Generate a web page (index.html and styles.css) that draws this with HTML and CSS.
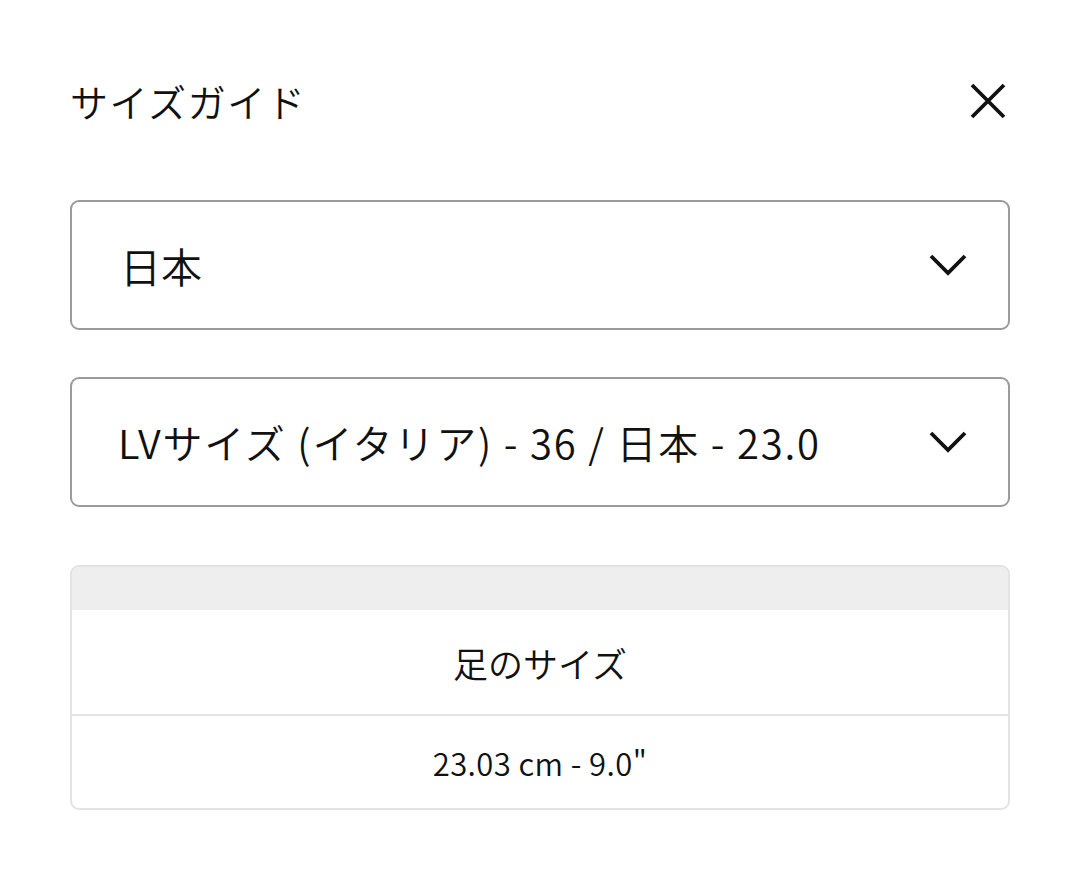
FILE: index.html
```html
<!DOCTYPE html>
<html lang="ja">
<head>
<meta charset="utf-8">
<title>サイズガイド</title>
<link rel="stylesheet" href="styles.css">
</head>
<body>
<main class="page">
  <header class="head">
    <h1 class="title">サイズガイド</h1>
    <button class="close" aria-label="閉じる">
      <svg width="38" height="38" viewBox="0 0 38 38"><path d="M3 3 L35 35 M35 3 L3 35" stroke="#111" stroke-width="3.8" fill="none"/></svg>
    </button>
  </header>

  <div class="select select-first">
    <span class="select-text">日本</span>
    <svg class="chev" width="38" height="24" viewBox="0 0 38 24"><path d="M2 3 L19 20 L36 3" stroke="#111" stroke-width="3.8" fill="none"/></svg>
  </div>

  <div class="select select-second">
    <span class="select-text select-text-long">LVサイズ (イタリア) - 36 / 日本 - 23.0</span>
    <svg class="chev" width="38" height="24" viewBox="0 0 38 24"><path d="M2 3 L19 20 L36 3" stroke="#111" stroke-width="3.8" fill="none"/></svg>
  </div>

  <div class="table">
    <div class="thead"></div>
    <div class="row row-label">足のサイズ</div>
    <div class="row row-value">23.03 cm - 9.0"</div>
  </div>
</main>
</body>
</html>
```

FILE: styles.css
```css
* { box-sizing: border-box; }
html, body { margin: 0; padding: 0; background: #fff; }
body {
  font-family: "Noto Sans CJK JP", "Noto Sans", sans-serif;
  font-weight: 350;
  color: #111;
}
.page {
  padding: 71px 70px 0 70px;
}
.head {
  height: 60px;
  display: flex;
  align-items: center;
  justify-content: space-between;
}
.title {
  margin: 0;
  font-size: 38px;
  font-weight: 350;
  line-height: 1;
  letter-spacing: 1.6px;
}
.close {
  border: 0;
  background: none;
  padding: 0;
  margin-right: 3px;
  width: 38px;
  height: 38px;
  display: flex;
  align-items: center;
  justify-content: center;
}
.select {
  height: 130px;
  border: 2px solid #9b9b9b;
  border-radius: 9px;
  display: flex;
  align-items: center;
  justify-content: space-between;
  padding: 0 41px 0 48px;
}
.select-first { margin-top: 69px; }
.select-second { margin-top: 47px; padding-left: 46px; }
.select-text {
  font-size: 41px;
  line-height: 1;
}
.select-text-long {
  font-size: 40px;
  letter-spacing: 1.8px;
}
.chev { display: block; }
.table {
  margin-top: 58px;
  border: 2px solid #e3e3e3;
  border-radius: 9px;
  overflow: hidden;
}
.thead {
  height: 43px;
  background: #eeeeee;
}
.row {
  display: flex;
  align-items: center;
  justify-content: center;
}
.row-label {
  height: 106px;
  font-size: 35px;
  border-bottom: 2px solid #e3e3e3;
}
.row-value {
  height: 92px;
  font-size: 31px;
  letter-spacing: 0.4px;
}
```
